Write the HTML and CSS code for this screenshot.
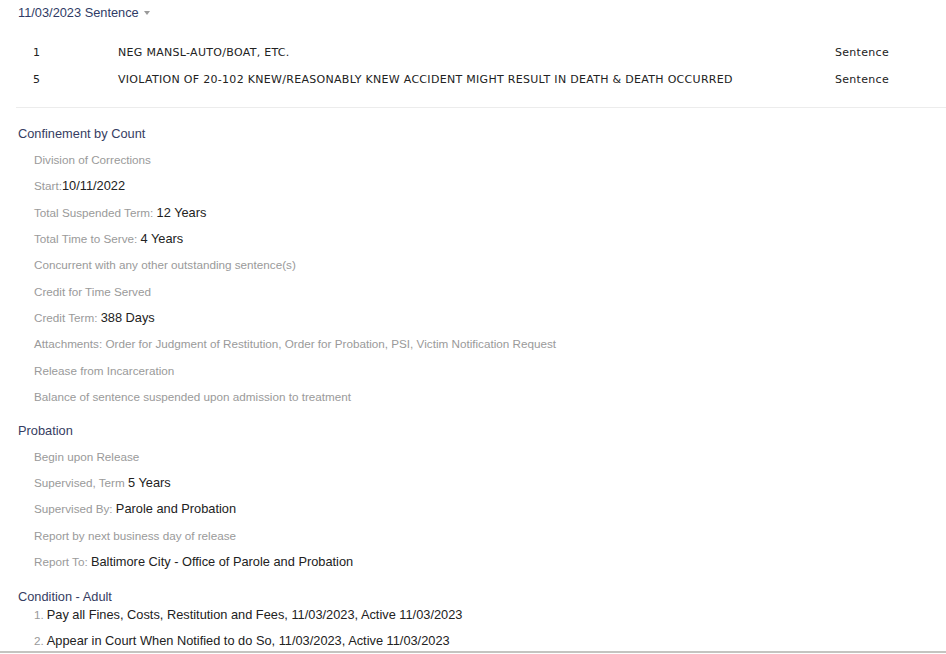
FILE: index.html
```html
<!DOCTYPE html>
<html>
<head>
<meta charset="utf-8">
<link rel="stylesheet" href="styles.css">
</head>
<body>
<div class="page">
  <div class="sentence-head">11/03/2023 Sentence <span class="caret"></span></div>
  <div class="charges">
    <div class="charge-row">
      <span class="c-num">1</span>
      <span class="c-desc">NEG MANSL-AUTO/BOAT, ETC.</span>
      <span class="c-type">Sentence</span>
    </div>
    <div class="charge-row">
      <span class="c-num">5</span>
      <span class="c-desc">VIOLATION OF 20-102 KNEW/REASONABLY KNEW ACCIDENT MIGHT RESULT IN DEATH &amp; DEATH OCCURRED</span>
      <span class="c-type">Sentence</span>
    </div>
  </div>

  <div class="section first">
    <div class="sec-title">Confinement by Count</div>
    <div class="items">
      <div class="item"><span class="lbl">Division of Corrections</span></div>
      <div class="item"><span class="lbl">Start:</span><span class="val">10/11/2022</span></div>
      <div class="item"><span class="lbl">Total Suspended Term: </span><span class="val">12 Years</span></div>
      <div class="item"><span class="lbl">Total Time to Serve: </span><span class="val">4 Years</span></div>
      <div class="item"><span class="lbl">Concurrent with any other outstanding sentence(s)</span></div>
      <div class="item"><span class="lbl">Credit for Time Served</span></div>
      <div class="item"><span class="lbl">Credit Term: </span><span class="val">388 Days</span></div>
      <div class="item"><span class="lbl">Attachments: Order for Judgment of Restitution, Order for Probation, PSI, Victim Notification Request</span></div>
      <div class="item"><span class="lbl">Release from Incarceration</span></div>
      <div class="item"><span class="lbl">Balance of sentence suspended upon admission to treatment</span></div>
    </div>
  </div>

  <div class="section prob">
    <div class="sec-title">Probation</div>
    <div class="items">
      <div class="item"><span class="lbl">Begin upon Release</span></div>
      <div class="item"><span class="lbl">Supervised, Term </span><span class="val">5 Years</span></div>
      <div class="item"><span class="lbl">Supervised By: </span><span class="val">Parole and Probation</span></div>
      <div class="item"><span class="lbl">Report by next business day of release</span></div>
      <div class="item"><span class="lbl">Report To: </span><span class="val">Baltimore City - Office of Parole and Probation</span></div>
    </div>
  </div>

  <div class="section cond">
    <div class="sec-title short">Condition - Adult</div>
    <div class="items cond-list">
      <div class="item"><span class="num">1.</span><span class="val">Pay all Fines, Costs, Restitution and Fees, 11/03/2023, Active 11/03/2023</span></div>
      <div class="item"><span class="num">2.</span><span class="val">Appear in Court When Notified to do So, 11/03/2023, Active 11/03/2023</span></div>
    </div>
  </div>
</div>
</body>
</html>
```

FILE: styles.css
```css
html, body {
  margin: 0;
  padding: 0;
  background: #ffffff;
}

body {
  font-family: "Liberation Sans", Arial, sans-serif;
  color: #222;
}

.page {
  height: 651px;
  border-bottom: 2px solid #c4c4c0;
  overflow: visible;
}

.sentence-head {
  height: 25px;
  line-height: 25px;
  padding-left: 18px;
  font-size: 12.8px;
  color: #2f3b66;
}

.caret {
  display: inline-block;
  width: 0;
  height: 0;
  border-left: 3.5px solid transparent;
  border-right: 3.5px solid transparent;
  border-top: 4px solid #9a9a9a;
  vertical-align: middle;
  margin-left: 2px;
  position: relative;
  top: -1px;
}

.charges {
  margin-left: 16px;
  margin-top: 13.5px;
  padding-bottom: 14.5px;
  border-bottom: 1px solid #ececec;
  font-family: "DejaVu Sans", Verdana, sans-serif;
  font-size: 11px;
  letter-spacing: 0.3px;
  color: #222;
}

.charge-row {
  display: grid;
  grid-template-columns: 102px 717px 1fr;
  height: 27px;
  line-height: 27px;
}

.c-num {
  padding-left: 17px;
}

.section {
  margin-top: 9px;
}

.section.first {
  margin-top: 13px;
}

.section.cond {
  margin-top: 12.5px;
}

.sec-title {
  padding-left: 18px;
  height: 26px;
  line-height: 26px;
  font-size: 12.8px;
  color: #363d62;
}

.sec-title.short {
  height: 20px;
  line-height: 20px;
}

.items {
  padding-left: 34px;
}

.item {
  height: 26.33px;
  line-height: 26.33px;
  white-space: nowrap;
}

.section.first .items {
  margin-top: -1px;
}

.section.prob .items {
  margin-top: -1.5px;
}

.cond-list {
  margin-top: -6px;
}

.cond-list .item {
  height: 26px;
  line-height: 26px;
}

.lbl {
  font-size: 11.7px;
  color: #9a9a9a;
}

.val {
  font-size: 12.8px;
  color: #222;
}

.num {
  font-size: 11.7px;
  color: #9a9a9a;
  margin-right: 3px;
}
```
